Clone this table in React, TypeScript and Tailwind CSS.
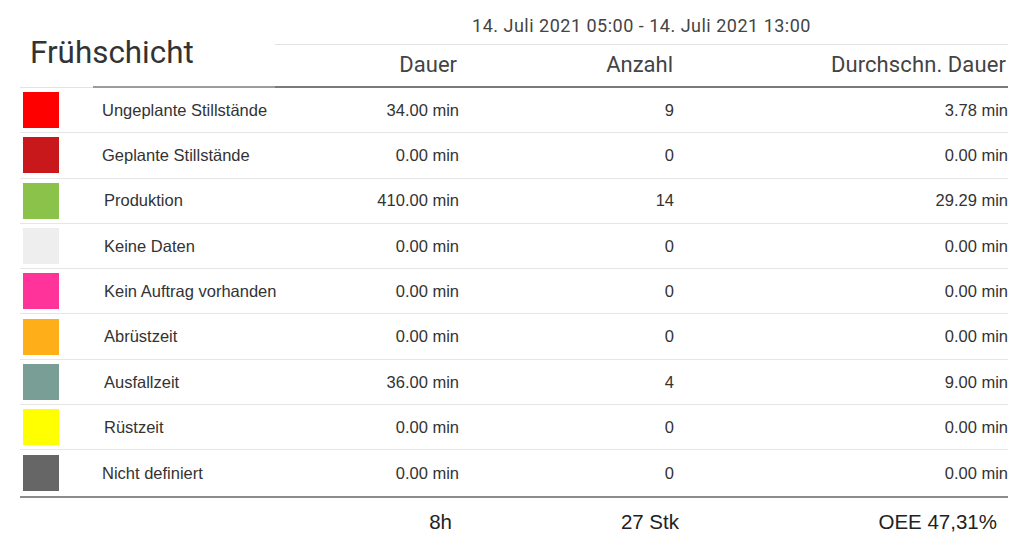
import React from "react";

const rows = [
  { color: "#ff0000", label: "Ungeplante Stillstände", dauer: "34.00 min", anzahl: "9", avg: "3.78 min", indent: "pl-[9px]" },
  { color: "#c9181c", label: "Geplante Stillstände", dauer: "0.00 min", anzahl: "0", avg: "0.00 min", indent: "pl-[9px]" },
  { color: "#8bc34a", label: "Produktion", dauer: "410.00 min", anzahl: "14", avg: "29.29 min", indent: "pl-[11px]" },
  { color: "#eeeeee", label: "Keine Daten", dauer: "0.00 min", anzahl: "0", avg: "0.00 min", indent: "pl-[11px]" },
  { color: "#ff3399", label: "Kein Auftrag vorhanden", dauer: "0.00 min", anzahl: "0", avg: "0.00 min", indent: "pl-[11px]" },
  { color: "#fdae19", label: "Abrüstzeit", dauer: "0.00 min", anzahl: "0", avg: "0.00 min", indent: "pl-[11px]" },
  { color: "#789e95", label: "Ausfallzeit", dauer: "36.00 min", anzahl: "4", avg: "9.00 min", indent: "pl-[11px]" },
  { color: "#ffff00", label: "Rüstzeit", dauer: "0.00 min", anzahl: "0", avg: "0.00 min", indent: "pl-[11px]" },
  { color: "#666666", label: "Nicht definiert", dauer: "0.00 min", anzahl: "0", avg: "0.00 min", indent: "pl-[9px]" },
];

const roboto = "font-['Roboto',_'Liberation_Sans',_sans-serif]";
const arial = "font-['Liberation_Sans',_Arial,_sans-serif]";

function App() {
  return (
    <div className="w-[1024px] h-[554px] bg-white overflow-hidden">
      <div className="ml-[20px] w-[988px]">
        {/* header */}
        <div className="flex h-[88px]">
          <div className="w-[255px] flex flex-col">
            <div className="flex-1 pt-[37px] pl-[10px]">
              <h1 className={`${roboto} text-[31.4px] leading-none text-[#333]`}>Frühschicht</h1>
            </div>
            <div className="flex items-end h-[2px]">
              <span className="w-[73px] border-b border-[#e3e3e3]" />
              <span className="flex-1 border-b-2 border-[#9c9c9c]" />
            </div>
          </div>
          <div className={`flex-1 flex flex-col ${roboto} text-[#444]`}>
            <div className="h-[45px] border-b border-[#e3e3e3] pt-[17px] text-center text-[18px] tracking-[0.5px] leading-none whitespace-nowrap">
              14. Juli 2021 05:00 - 14. Juli 2021 13:00
            </div>
            <div className="h-[43px] border-b-2 border-[#7a7a7a] grid grid-cols-[190px_215px_328px] pt-[9px] text-[22px] leading-none text-right whitespace-nowrap">
              <div className="pr-[8px]">Dauer</div>
              <div className="pr-[7px]">Anzahl</div>
              <div className="pr-[2px] tracking-[0.1px]">Durchschn. Dauer</div>
            </div>
          </div>
        </div>

        {/* rows */}
        <div className={`border-b-2 border-[#8c8c8c] ${arial} text-[16.5px] leading-none text-[#333] whitespace-nowrap`}>
          {rows.map((r, i) => (
            <div
              key={r.label}
              className={`h-[45.3px] grid grid-cols-[73px_182px_190px_215px_328px] items-center ${
                i < rows.length - 1 ? "border-b border-[#e6e6e6]" : ""
              }`}
            >
              <div className="pl-[3px]">
                <div className="w-[36px] h-[36px]" style={{ backgroundColor: r.color }} />
              </div>
              <div className={r.indent}>{r.label}</div>
              <div className="text-right pr-[6px]">{r.dauer}</div>
              <div className="text-right pr-[6px]">{r.anzahl}</div>
              <div className="text-right">{r.avg}</div>
            </div>
          ))}
        </div>

        {/* footer */}
        <div className={`h-[50px] grid grid-cols-[73px_182px_190px_215px_328px] items-center ${arial} text-[20.5px] leading-none text-[#222] whitespace-nowrap`}>
          <div />
          <div />
          <div className="text-right pr-[13px]">8h</div>
          <div className="text-right pr-[1px]">27 Stk</div>
          <div className="text-right pr-[11px]">OEE 47,31%</div>
        </div>
      </div>
    </div>
  );
}

export default App;
